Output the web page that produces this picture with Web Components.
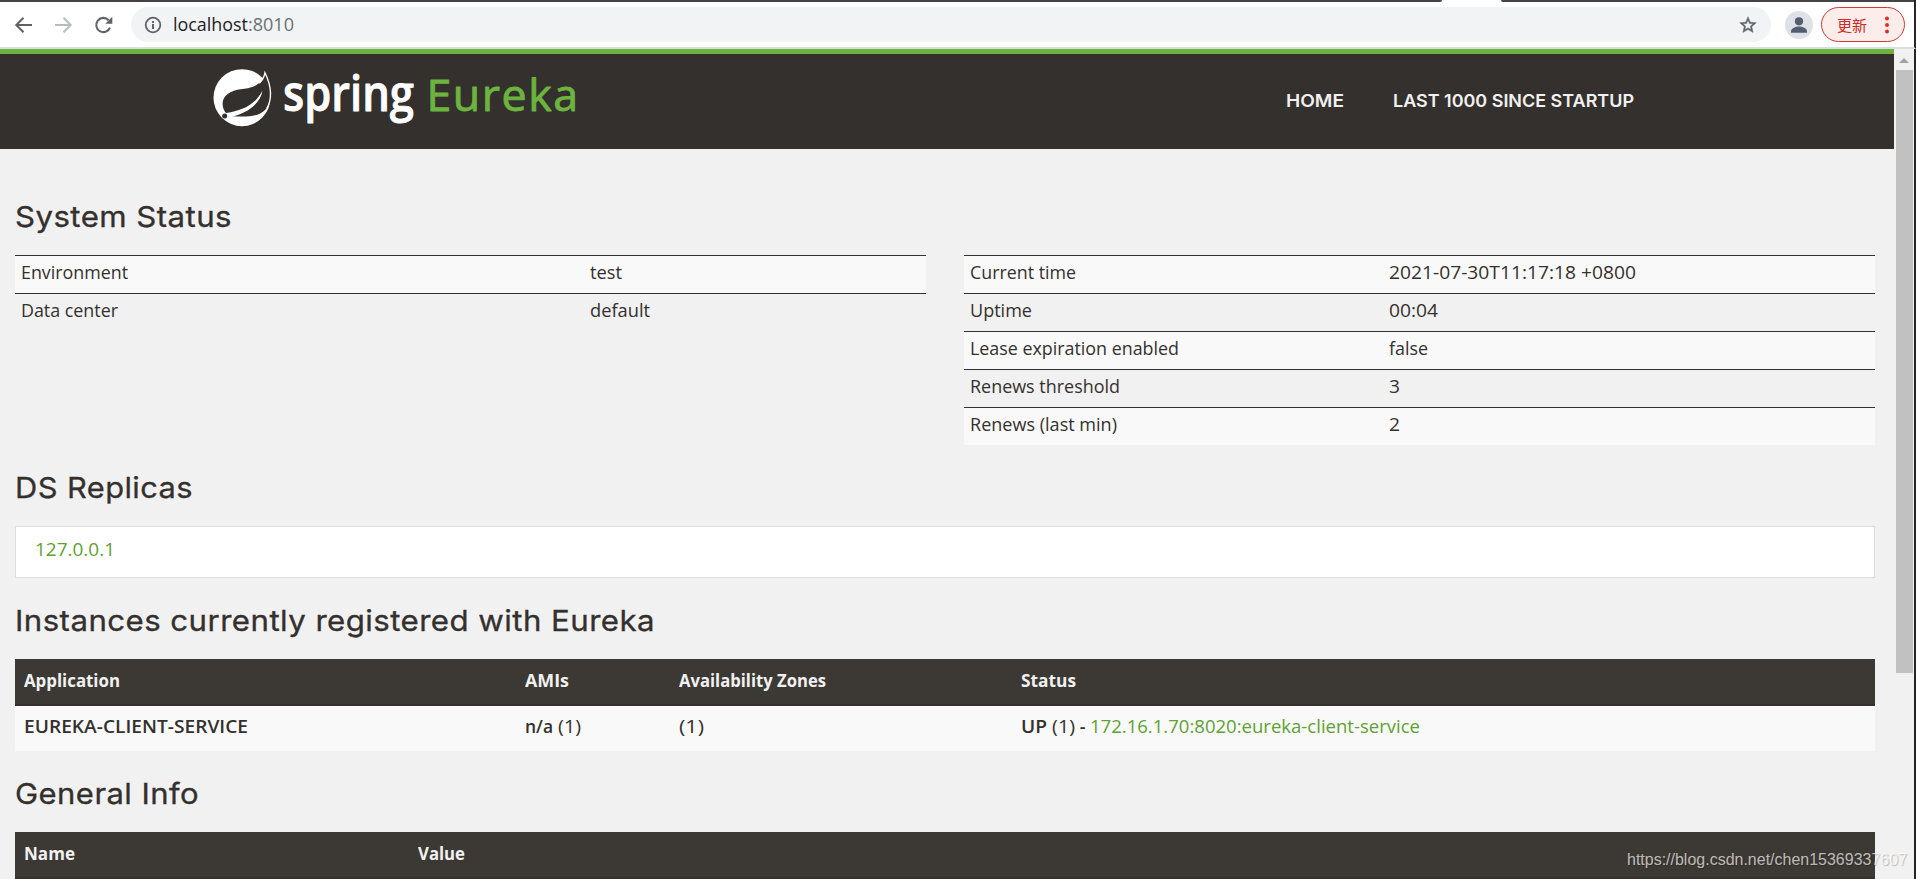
<!DOCTYPE html>
<html lang="en">
<head>
<meta charset="utf-8">
<title>Eureka</title>
<style>
  html, body { margin: 0; height: 100%; overflow: hidden; }
  body { background: #f1f1f1; color: #34302d; font-family: "Open Sans", "Noto Sans", sans-serif; }
</style>
</head>
<body>
<eureka-app></eureka-app>

<script>
/**
 * Text that is stretched or condensed to a given width.
 */
customElements.define('fit-text',
  class extends HTMLElement {
    constructor () {
      super()
      this.attachShadow({ mode: 'open' }).innerHTML = `
        <style>
          :host { display: inline-block; }
          span { display: inline-block; white-space: pre; transform-origin: 0 0; }
        </style>
        <span><slot></slot></span>`
    }

    connectedCallback () {
      const span = this.shadowRoot.querySelector('span')
      const width = Number(this.getAttribute('w'))
      if (!width) return
      const natural = span.getBoundingClientRect().width
      span.style.transform = `scaleX(${width / natural})`
      span.style.width = `${natural}px`
      span.style.marginRight = `${width - natural}px`
    }
  }
)

customElements.define('browser-bar',
  class extends HTMLElement {
    constructor () {
      super()
      this.attachShadow({ mode: 'open' }).innerHTML = `
        <style>
          :host { display: block; height: 49px; box-sizing: border-box; background: #fff;
            border-bottom: 2px solid #dcdde1; border-right: 2px solid #262626; }
          .tabs { display: flex; height: 2px; justify-content: space-between; }
          .tabs i { background: #454343; height: 2px; }
          .tabs i:first-child { width: 1442px; border-radius: 0 0 2px 0; }
          .tabs i:last-child { width: 413px; border-radius: 0 0 0 2px; }
          .bar { display: flex; align-items: center; height: 45px; }
          .nav { display: flex; gap: 20px; padding-left: 13px; width: 118px; box-sizing: border-box; }
          svg { display: block; flex: none; }
          .url { display: flex; align-items: center; width: 1640px; height: 35px; box-sizing: border-box; margin-left: 13px;
            padding: 0 13px; border-radius: 18px; background: #f1f3f4; font-size: 18.4px; line-height: 33px; color: #202124; }
          .url svg:first-child { margin-right: 11px; }
          .url em { font-style: normal; color: #6b6f74; }
          .url fit-text { margin-bottom: 2px; }
          .star { margin-left: auto; }
          .avatar { margin-left: 14px; }
          .update { display: flex; align-items: center; width: 84px; height: 35px; box-sizing: border-box; margin-left: 8px;
            padding-left: 15px; border: 1.5px solid #cf3a32; border-radius: 18px; background: #fcecea; color: #cc2a24;
            font: 15px "Noto Sans CJK SC", sans-serif; }
          .update svg { margin-left: 17px; }
        </style>
        <div class="tabs"><i></i><i></i></div>
        <div class="bar">
          <div class="nav">
            <svg width="20" height="20" viewBox="0 0 20 20" fill="none" stroke="#5f6368" stroke-width="2"><path d="M19 10H4M10.5 2.8L3.3 10l7.2 7.2"/></svg>
            <svg width="20" height="20" viewBox="0 0 20 20" fill="none" stroke="#babcbe" stroke-width="2"><path d="M2 10h15M10.5 2.8l7.2 7.2-7.2 7.2"/></svg>
            <svg width="20" height="20" viewBox="0 0 20 20" fill="none" stroke="#5f6368" stroke-width="2.1"><path d="M15.6 5.2A7.1 7.1 0 1 0 17 12.6"/><path d="M19.3 1.8v7h-7z" fill="#5f6368" stroke="none"/></svg>
          </div>
          <div class="url">
            <svg width="18" height="18" viewBox="0 0 18 18"><circle cx="9" cy="9" r="7.3" fill="none" stroke="#5f6368" stroke-width="1.8"/><path d="M8 8h2v5H8zM8 5h2v2H8z" fill="#5f6368"/></svg>
            <fit-text w="75">localhost</fit-text><em><fit-text w="46">:8010</fit-text></em>
            <svg class="star" width="20" height="20" viewBox="0 0 24 24" fill="#5f6368"><path d="M22 9.24l-7.19-.62L12 2 9.19 8.63 2 9.24l5.46 4.73L5.82 21 12 17.27 18.18 21l-1.63-7.03zM12 15.4l-3.76 2.27 1-4.28-3.32-2.88 4.38-.38L12 6.1l1.71 4.04 4.38.38-3.32 2.88 1 4.28z" stroke="#5f6368" stroke-width=".5"/></svg>
          </div>
          <svg class="avatar" width="28" height="28" viewBox="0 0 28 28"><circle cx="14" cy="14" r="14" fill="#dee1e6"/><circle cx="14" cy="10.3" r="4.1" fill="#545d70"/><path d="M6 21.8v-1.5c0-3 4.6-4.7 8-4.7s8 1.7 8 4.7v1.5z" fill="#545d70"/></svg>
          <div class="update">更新<svg width="6" height="18" viewBox="0 0 6 18" fill="#d93025"><circle cx="3" cy="2.6" r="2"/><circle cx="3" cy="9" r="2"/><circle cx="3" cy="15.4" r="2"/></svg></div>
        </div>`
    }
  }
)

customElements.define('spring-header',
  class extends HTMLElement {
    constructor () {
      super()
      this.attachShadow({ mode: 'open' }).innerHTML = `
        <style>
          :host { display: flex; height: 100px; box-sizing: border-box; border-top: 5px solid #6db33f; background: #34302d; }
          svg { display: block; margin-left: 210px; }
          nav { display: flex; margin-left: 676px; gap: 49px; padding-top: 35px;
            font: 600 17.6px/24px Inter, sans-serif; color: #f1f1f1; }
        </style>
        <svg width="400" height="90" viewBox="210 54 400 90">
          <g transform="translate(208 64) scale(.3333)">
            <circle cx="102" cy="101" r="85.500" fill="#fff"/>
            <path d="M171 30C163 52 150 66 120 73C90 76 62 80 48 102C40 118 44 138 56 149L72 157C110 158 150 162 175 134C200 105 192 70 171 30Z" fill="#34302d"/>
            <path d="M154 58Q168 44 171 26C190 66 193 105 176 134" fill="none" stroke="#fff" stroke-width="4"/>
            <path d="M163 80C160 112 120 152 58 160L50 148C100 140 140 125 163 80Z" fill="#fff"/>
            <circle cx="50" cy="156" r="7.500" fill="#34302d"/>
          </g>
          <text x="283" y="110.500" textLength="131" lengthAdjust="spacingAndGlyphs" font-family="Open Sans" font-size="48" font-weight="600" fill="#fff" stroke="#fff" stroke-width=".8" stroke-linejoin="round">spring</text>
          <text x="426.500" y="110.500" textLength="153" lengthAdjust="spacingAndGlyphs" letter-spacing="1.500" font-family="Open Sans" font-size="44" fill="#6db33f" stroke="#6db33f" stroke-width=".9" stroke-linejoin="round">Eureka</text>
        </svg>
        <nav><fit-text w="58">HOME</fit-text><fit-text w="241">LAST 1000 SINCE STARTUP</fit-text></nav>`
    }
  }
)

customElements.define('section-title',
  class extends HTMLElement {
    constructor () {
      super()
      this.attachShadow({ mode: 'open' }).innerHTML = `
        <style>
          :host { display: block; height: 57px; box-sizing: border-box; margin-top: 24px; padding-top: 1px; }
          h2 { margin: 0; font: 400 29px/36px Inter, sans-serif; letter-spacing: .4px; -webkit-text-stroke: .3px #34302d; }
        </style>
        <h2><slot></slot></h2>`
    }
  }
)

// label/value rows, striped
customElements.define('status-table',
  class extends HTMLElement {
    constructor () {
      super()
      this.attachShadow({ mode: 'open' }).innerHTML = `
        <style>
          :host { display: block; width: 911px; }
          ::slotted(div) { display: grid; grid-template-columns: var(--label) 1fr; height: 38px; box-sizing: border-box;
            padding: 4px 5px 0 6px; border-top: 1px solid #34302d; font-size: 17.4px; line-height: 24px; }
          ::slotted(div:nth-child(odd)) { background: #f9f9f9; }
        </style>
        <slot></slot>`
    }
  }
)

customElements.define('data-table',
  class extends HTMLElement {
    constructor () {
      super()
      this.attachShadow({ mode: 'open' }).innerHTML = `
        <style>
          :host { display: block; font-size: 17.4px; line-height: 24px; }
          ::slotted(div) { display: grid; grid-template-columns: var(--cols); height: 45px; box-sizing: border-box;
            padding: 8px 9px 0; background: #f9f9f9; }
          ::slotted(div.head) { height: 47px; padding-top: 9px; background: #3c3833; border-bottom: 2px solid #34302d; color: #f1f1f1; font-weight: 700; }
        </style>
        <slot></slot>`
    }
  }
)

customElements.define('scroll-bar',
  class extends HTMLElement {
    constructor () {
      super()
      this.attachShadow({ mode: 'open' }).innerHTML = `
        <style>
          :host { display: block; width: 20px; background: #f1f1f1; border-right: 2px solid #262626; }
          svg { display: block; margin: 9px 0 7px 5px; }
          i { display: block; width: 17px; height: 603px; margin-left: 2px; background: #c1c1c1; }
        </style>
        <svg width="10" height="5" viewBox="0 0 10 5"><path d="M5 0l5 5H0z" fill="#a3a3a3"/></svg>
        <i></i>`
    }
  }
)

customElements.define('eureka-app',
  class extends HTMLElement {
    constructor () {
      super()
      this.attachShadow({ mode: 'open' }).innerHTML = `
        <style>
          :host { display: flex; flex-direction: column; width: 1916px; height: 879px; overflow: hidden; position: relative; }
          .view { display: flex; flex: 1; min-height: 0; }
          .page { width: 1894px; }
          main { padding: 25px 19px 0 15px; }
          .cols { display: flex; gap: 38px; }
          .box { height: 52px; box-sizing: border-box; padding: 10px 19px; border: 1px solid #ddd; background: #fff;
            font-size: 17.4px; line-height: 24px; }
          .link { color: #5fa134; }
          b { font-weight: 600; }
          .mark { position: absolute; left: 1627px; top: 850px; font: 17px/20px "Liberation Sans", sans-serif;
            color: rgba(255, 255, 255, .68); text-shadow: 1px 1px 1px rgba(0, 0, 0, .22); }
        </style>
        <browser-bar></browser-bar>
        <div class="view">
          <div class="page">
            <spring-header></spring-header>
            <main>
              <section-title><fit-text w="217">System Status</fit-text></section-title>
              <div class="cols">
                <status-table style="--label: 569px">
                  <div><span><fit-text w="107">Environment</fit-text></span><span><fit-text w="32">test</fit-text></span></div>
                  <div><span><fit-text w="97">Data center</fit-text></span><span><fit-text w="60">default</fit-text></span></div>
                </status-table>
                <status-table style="--label: 419px">
                  <div><span><fit-text w="106">Current time</fit-text></span><span><fit-text w="247">2021-07-30T11:17:18 +0800</fit-text></span></div>
                  <div><span><fit-text w="62">Uptime</fit-text></span><span><fit-text w="49">00:04</fit-text></span></div>
                  <div><span><fit-text w="209">Lease expiration enabled</fit-text></span><span><fit-text w="39">false</fit-text></span></div>
                  <div><span><fit-text w="150">Renews threshold</fit-text></span><span><fit-text w="11">3</fit-text></span></div>
                  <div><span><fit-text w="147">Renews (last min)</fit-text></span><span><fit-text w="11">2</fit-text></span></div>
                </status-table>
              </div>
              <section-title><fit-text w="178">DS Replicas</fit-text></section-title>
              <div class="box"><fit-text class="link" w="80">127.0.0.1</fit-text></div>
              <section-title><fit-text w="640">Instances currently registered with Eureka</fit-text></section-title>
              <data-table style="--cols: 501px 154px 342px 1fr">
                <div class="head">
                  <span><fit-text w="96">Application</fit-text></span><span><fit-text w="44">AMIs</fit-text></span>
                  <span><fit-text w="147">Availability Zones</fit-text></span><span><fit-text w="55">Status</fit-text></span>
                </div>
                <div>
                  <b><fit-text w="224">EUREKA-CLIENT-SERVICE</fit-text></b>
                  <span><b><fit-text w="28">n/a</fit-text></b><fit-text w="28"> (1)</fit-text></span>
                  <span><fit-text w="25">(1)</fit-text></span>
                  <span><b><fit-text w="26">UP</fit-text></b><fit-text w="28"> (1)</fit-text><b><fit-text w="15"> - </fit-text></b><fit-text class="link" w="330">172.16.1.70:8020:eureka-client-service</fit-text></span>
                </div>
              </data-table>
              <section-title><fit-text w="184">General Info</fit-text></section-title>
              <data-table style="--cols: 394px 1fr">
                <div class="head"><span><fit-text w="51">Name</fit-text></span><span><fit-text w="47">Value</fit-text></span></div>
              </data-table>
            </main>
          </div>
          <scroll-bar></scroll-bar>
        </div>
        <div class="mark"><fit-text w="280">https://blog.csdn.net/chen15369337607</fit-text></div>`
    }
  }
)
</script>
</body>
</html>
